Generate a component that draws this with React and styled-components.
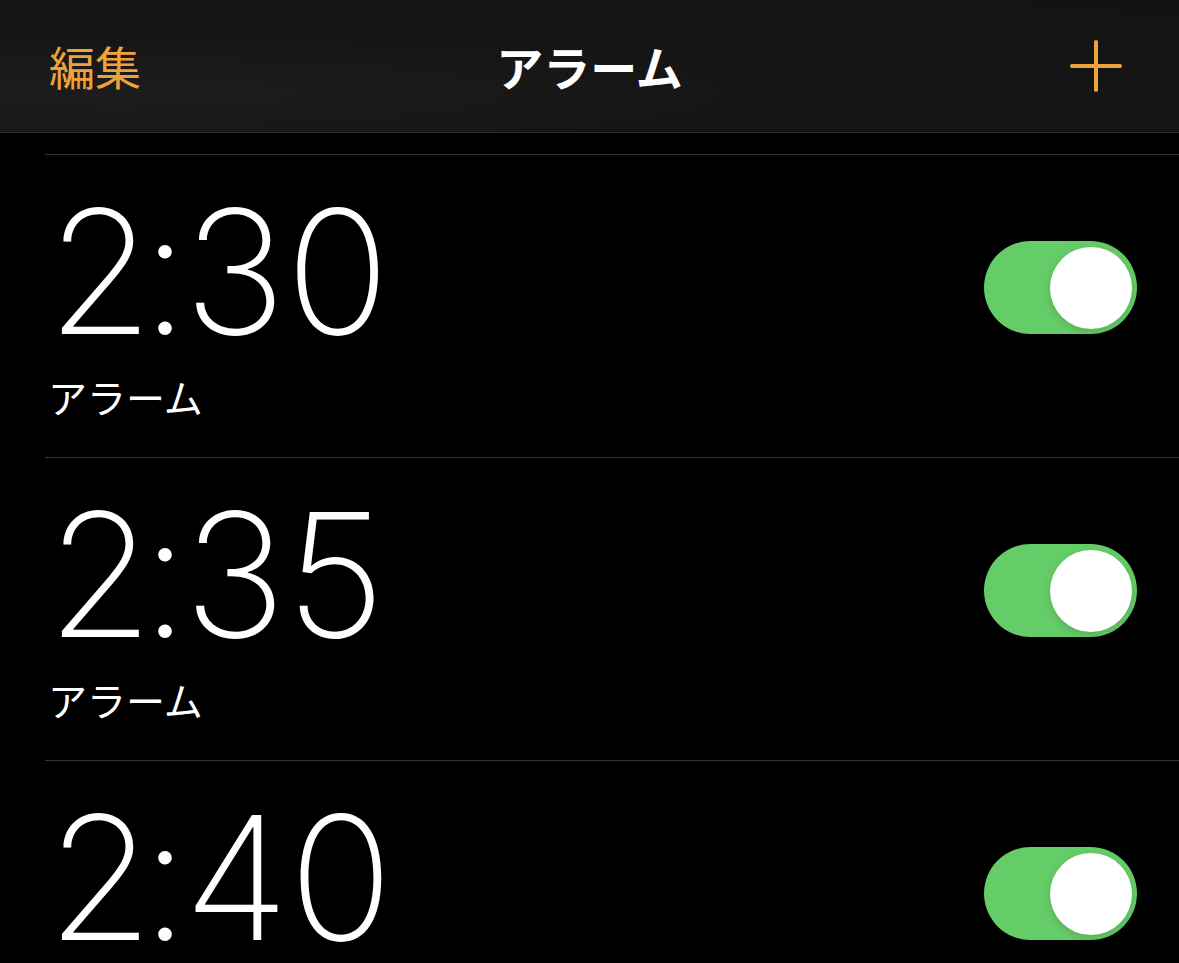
import styled, { createGlobalStyle } from "styled-components";

const GlobalStyle = createGlobalStyle`
  html, body {
    margin: 0;
    padding: 0;
    background: #000;
  }
  body {
    font-family: Inter, "Noto Sans CJK JP", sans-serif;
    -webkit-font-smoothing: antialiased;
  }
`;

const alarms = [
  { hour: "2", minute: "30", label: "アラーム", on: true },
  { hour: "2", minute: "35", label: "アラーム", on: true },
  { hour: "2", minute: "40", label: "アラーム", on: true },
];

export default function App() {
  return (
    <>
      <GlobalStyle />
      <Screen>
        <Header>
          <EditButton>編集</EditButton>
          <Title>アラーム</Title>
          <AddButton aria-label="追加">
            <svg width="56" height="56" viewBox="0 0 56 56">
              <path
                d="M28 4 V52 M4 28 H52"
                stroke="#f0a23a"
                strokeWidth="4"
                strokeLinecap="round"
                fill="none"
              />
            </svg>
          </AddButton>
        </Header>
        <List>
          {alarms.map((a) => (
            <Row key={a.hour + a.minute}>
              <Info>
                <Time>
                  <Hour>{a.hour}</Hour>
                  <Colon>:</Colon>
                  <Minute>{a.minute}</Minute>
                </Time>
                <Label>{a.label}</Label>
              </Info>
              <Toggle $on={a.on}>
                <Knob />
              </Toggle>
            </Row>
          ))}
        </List>
      </Screen>
    </>
  );
}

const Screen = styled.div`
  width: 1179px;
  height: 963px;
  overflow: hidden;
  background: #000;
`;

const Header = styled.header`
  height: 133px;
  box-sizing: border-box;
  display: flex;
  align-items: center;
  justify-content: space-between;
  padding: 0 55px 0 49px;
  background: radial-gradient(ellipse at 10% 70%, #1d1d1d 0%, #151515 45%, #131313 100%);
  border-bottom: 1px solid #2e2e2e;
  position: relative;
`;

const EditButton = styled.button`
  background: none;
  border: none;
  padding: 0;
  color: #f0a23a;
  font-family: "Noto Sans CJK JP", sans-serif;
  font-size: 46px;
  font-weight: 400;
  margin-top: -2px;
`;

const Title = styled.h1`
  position: absolute;
  left: 0;
  right: 0;
  margin: 0;
  text-align: center;
  color: #fff;
  font-family: "Noto Sans CJK JP", sans-serif;
  font-size: 47px;
  font-weight: 700;
  pointer-events: none;
  margin-top: -2px;
`;

const AddButton = styled.button`
  background: none;
  border: none;
  padding: 0;
  display: flex;
  width: 56px;
  height: 56px;
`;

const List = styled.div`
  padding-top: 21px;
  padding-left: 45px;
`;

const Row = styled.div`
  height: 303px;
  box-sizing: border-box;
  border-top: 1px solid #333;
  display: flex;
  justify-content: space-between;
  align-items: flex-start;
  padding-right: 42px;
`;

const Info = styled.div`
  display: flex;
  flex-direction: column;
  padding-top: 30px;
`;

const Time = styled.div`
  color: #fff;
  font-family: Inter, sans-serif;
  font-size: 172px;
  font-weight: 200;
  line-height: 1;
  margin-left: 2px;
  white-space: nowrap;
`;

const Hour = styled.span`
  letter-spacing: -12px;
`;

const Colon = styled.span`
  letter-spacing: -5px;
`;

const Minute = styled.span`
  letter-spacing: 0;
`;

const Label = styled.div`
  color: #fff;
  font-family: "Noto Sans CJK JP", sans-serif;
  font-size: 39px;
  font-weight: 400;
  line-height: 1;
  margin-top: 20px;
  margin-left: 3px;
`;

const Toggle = styled.div`
  width: 153px;
  height: 93px;
  border-radius: 47px;
  margin-top: 86px;
  background: ${(p) => (p.$on ? "#65cd67" : "#39393d")};
  display: flex;
  align-items: center;
  justify-content: ${(p) => (p.$on ? "flex-end" : "flex-start")};
  padding: 0 5px;
  box-sizing: border-box;
`;

const Knob = styled.div`
  width: 82px;
  height: 82px;
  border-radius: 50%;
  background: #fff;
  box-shadow: 0 3px 8px rgba(0, 0, 0, 0.15);
`;
